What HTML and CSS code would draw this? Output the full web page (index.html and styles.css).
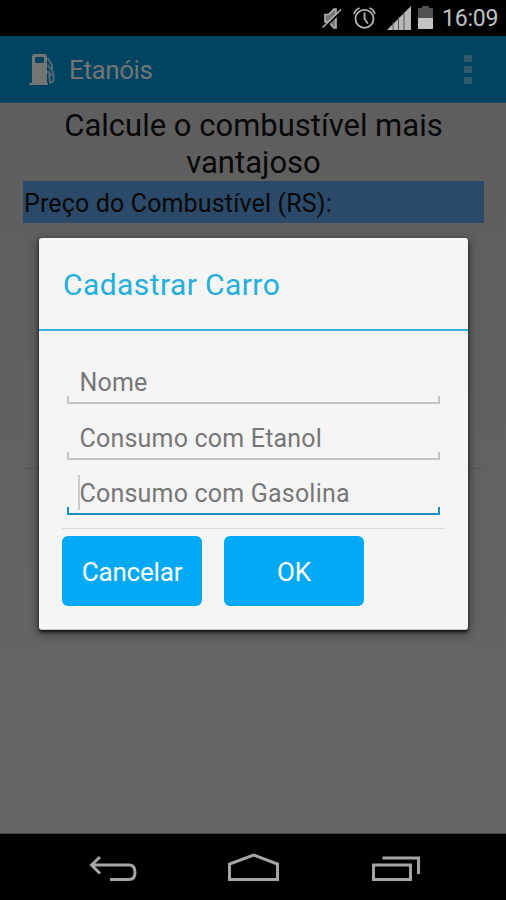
FILE: index.html
```html
<!DOCTYPE html>
<html lang="pt-BR">
<head>
  <meta charset="UTF-8" />
  <meta name="viewport" content="width=device-width, initial-scale=1.0"/>
  <title>Etanóis</title>
  <link rel="stylesheet" href="styles.css">
</head>
<body>

  <div class="status-bar">
    <svg class="status-icons" width="118" height="36" viewBox="0 0 118 36">
      <!-- muted -->
      <g fill="none" stroke="#b4b4b4" stroke-width="1.6">
        <path d="M4 14.500h3.500L13 9h2v19h-2l-5.500-6H4z" fill="#777"/>
        <path d="M2.500 28.500L21 10.500" stroke="#000" stroke-width="2"/>
        <path d="M1.500 27.500L20 9.500"/>
      </g>
      <!-- alarm -->
      <g fill="none" stroke="#b4b4b4" stroke-width="1.8">
        <circle cx="43.500" cy="18.800" r="9"/>
        <path d="M43.500 12.500v6.500l3.500 4.500M33 14q1.500-4.500 5.500-6M54 14q-1.500-4.500-5.500-6"/>
      </g>
      <!-- signal -->
      <path d="M66 30L90 6v24z" fill="#b8b8b8"/>
      <path d="M72 22v8M77.500 17v13M83 12v18" stroke="#555" stroke-width="1"/>
      <!-- battery -->
      <path d="M97 8h4V6h7v2h4v11H97z" fill="#505050"/>
      <path d="M97 18h15v11H97z" fill="#c4c4c4"/>
    </svg>
    <span class="clock">16:09</span>
  </div>

  <header>
    <svg class="logo" width="28" height="33" viewBox="0 0 28 33">
      <path d="M4 30V4q0-3 3-3h9q3 0 3 3v26h1v2H1v-2zM7 5v4l1 1h7l1-1V5l-1-1H8z" fill="#747474" fill-rule="evenodd"/>
      <path d="M19.500 5l4.500 7v5l1.500 4v6q-1 3-3.500 2l-1-10h-2" fill="none" stroke="#566972" stroke-width="2"/>
      <path d="M20 12l3 5M21 19l3 4" fill="none" stroke="#4d6571" stroke-width="2"/>
    </svg>
    <h1>Etanóis</h1>
    <div class="menu">
      <span></span>
      <span></span>
      <span></span>
    </div>
  </header>

  <main>
    <h2 class="headline">Calcule o combustível mais<br>vantajoso</h2>
    <div class="price-label">Preço do Combustível (RS):</div>
    <div class="page-line"></div>

    <div class="dialog">
      <h3>Cadastrar Carro</h3>
      <div class="dialog-body">
        <div class="field">Nome</div>
        <div class="field">Consumo com Etanol</div>
        <div class="field active">Consumo com Gasolina</div>
        <div class="buttons">
          <button>Cancelar</button>
          <button>OK</button>
        </div>
      </div>
    </div>
  </main>

  <nav>
    <svg width="506" height="66" viewBox="0 0 506 66" fill="none" stroke="#a5a5a5" stroke-width="3">
      <path d="M92 31h37q6 0 6 7.300t-6 7.300h-19M100 23l-8.500 8 8.500 8.500"/>
      <path d="M229.500 45.500V30L253.500 21l24 9v15.500z"/>
      <path d="M373.500 31h37v14.500h-37zM382.500 24h36v16"/>
    </svg>
  </nav>

</body>
</html>
```

FILE: styles.css
```css
* {
  box-sizing: border-box;
}

body {
  margin: 0;
  width: 506px;
  height: 900px;
  display: flex;
  flex-direction: column;
  overflow: hidden;
  background-color: #000;
  font-family: Roboto, sans-serif;
}

h1, h2, h3 {
  margin: 0;
  font-weight: normal;
}

.status-bar {
  height: 36px;
  display: flex;
  justify-content: flex-end;
  padding-right: 8px;
  color: #c0c0c0;
}
.clock {
  width: 56px;
  margin-left: 3px;
  font-size: 23px;
  line-height: 38px;
  letter-spacing: -0.2px;
  white-space: nowrap;
}

header {
  height: 67px;
  display: flex;
  align-items: center;
  padding: 0 34px 0 28px;
  background-color: #004462;
  border-bottom: 1px solid #24485a;
  color: #747474;
}
header h1 {
  flex: 1;
  margin-left: 13px;
  font-size: 26px;
  line-height: 32px;
  letter-spacing: -0.4px;
  padding-top: 2px;
}
.menu {
  display: grid;
  gap: 4px;
}
.menu span {
  width: 8px;
  height: 7px;
  background-color: #2d5a6d;
}

main {
  position: relative;
  height: 731px;
  padding: 4px 22px 0 23px;
  background: linear-gradient(#5e5e5e, #666);
  border-bottom: 1px solid #484848;
  color: #080808;
}
.headline {
  font-size: 31px;
  line-height: 37px;
  text-align: center;
  white-space: nowrap;
}
.price-label {
  height: 42px;
  background-color: #2b4a69;
  font-size: 25px;
  line-height: 45px;
  letter-spacing: 0.15px;
  padding-left: 1px;
}
.page-line {
  height: 1px;
  margin-top: 245px;
  background-color: #575757;
}

/* Dialog over the page */
.dialog {
  position: absolute;
  top: 135px;
  left: 39px;
  width: 429px;
  height: 392px;
  background-color: #f5f5f5;
  border-radius: 3px;
  border-bottom: 1px solid #ccc;
  box-shadow: 0 2px 3px 0 #111, 0 3px 10px 2px rgba(0,0,0,0.35);
}
.dialog h3 {
  height: 93px;
  padding-left: 24px;
  border-bottom: 2px solid #2fb4dc;
  color: #24afdc;
  font-size: 30px;
  line-height: 94px;
  letter-spacing: 0.42px;
}
.dialog-body {
  padding: 26px 23px 0;
}
.field {
  position: relative;
  height: 47px;
  margin: 0 5px 8.500px;
  padding-left: 12.500px;
  color: #777;
  font-size: 25px;
  line-height: 51px;
  letter-spacing: 0.2px;
  white-space: nowrap;
}
/* open bracket under each input */
.field::after {
  content: "";
  position: absolute;
  left: 0;
  right: 0;
  bottom: 0;
  height: 6px;
  border: 2px solid #c4c4c4;
  border-top: none;
}
.field.active {
  margin-bottom: 0;
}
.field.active::before {
  content: "";
  position: absolute;
  left: 11px;
  top: 7px;
  width: 2px;
  height: 35px;
  background-color: #ccc;
}
.field.active::after {
  border-color: #1f8fc3;
}

.buttons {
  display: flex;
  gap: 22px;
  margin-top: 13px;
  padding-top: 7px;
  border-top: 1px solid #dadada;
}
.buttons button {
  width: 140px;
  height: 70px;
  padding: 2px 0 0;
  border: none;
  border-radius: 6px;
  background-color: #03a9f4;
  color: #fff;
  font-family: inherit;
  font-size: 26px;
  letter-spacing: -0.2px;
}

nav {
  height: 66px;
}
nav svg {
  display: block;
}
```
